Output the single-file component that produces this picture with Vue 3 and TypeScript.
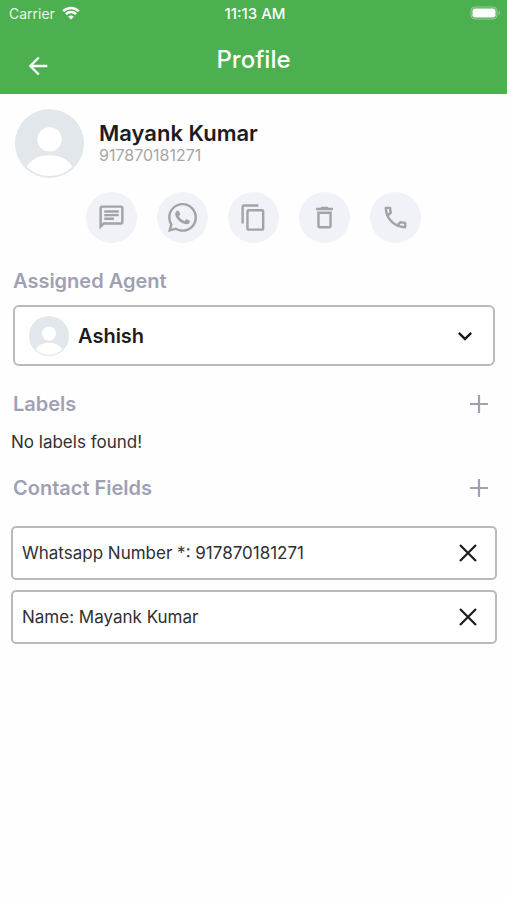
<script setup lang="ts">
import { ref } from 'vue'

interface Action {
  id: string
  label: string
  paths: string[]
  size: number
}

interface ContactField {
  label: string
  value: string
}

const contact = { name: 'Mayank Kumar', phone: '917870181271' }

const actions: Action[] = [
  {
    id: 'message',
    label: 'Send message',
    size: 29,
    paths: [
      'M4 4h16v12H5.17L4 17.17V4m0-2c-1.1 0-1.99.9-1.99 2L2 22l4-4h14c1.1 0 2-.9 2-2V4c0-1.1-.9-2-2-2H4zm2 10h8v2H6v-2zm0-3h12v2H6V9zm0-3h12v2H6V6z',
    ],
  },
  {
    id: 'whatsapp',
    label: 'Open WhatsApp',
    size: 35,
    paths: [
      'M19.05 4.91A9.82 9.82 0 0 0 12.04 2c-5.46 0-9.91 4.45-9.91 9.91 0 1.75.46 3.45 1.32 4.95L2.05 22l5.25-1.38c1.45.79 3.08 1.21 4.74 1.21 5.46 0 9.91-4.45 9.91-9.91 0-2.65-1.03-5.14-2.9-7.01zM12.04 20.15c-1.48 0-2.93-.4-4.2-1.15l-.3-.18-3.12.82.83-3.04-.2-.31a8.26 8.26 0 0 1-1.26-4.38c0-4.54 3.7-8.24 8.24-8.24 2.2 0 4.27.86 5.82 2.42a8.18 8.18 0 0 1 2.41 5.83c.02 4.54-3.68 8.23-8.22 8.23z',
      'M16.56 13.99c-.25-.12-1.47-.72-1.69-.81-.23-.08-.39-.12-.56.12-.17.25-.64.81-.78.97-.14.17-.29.19-.54.06-.25-.12-1.05-.39-1.99-1.23-.74-.66-1.23-1.47-1.38-1.72-.14-.25-.02-.38.11-.51.11-.11.25-.29.37-.43s.17-.25.25-.41c.08-.17.04-.31-.02-.43s-.56-1.34-.76-1.84c-.2-.48-.41-.42-.56-.43h-.48c-.17 0-.43.06-.66.31-.22.25-.86.85-.86 2.07s.89 2.4 1.01 2.56c.12.17 1.75 2.67 4.23 3.74.59.26 1.05.41 1.41.52.59.19 1.13.16 1.56.1.48-.07 1.47-.6 1.67-1.18.21-.58.21-1.07.14-1.18s-.22-.16-.47-.28z',
    ],
  },
  {
    id: 'copy',
    label: 'Copy contact',
    size: 29,
    paths: [
      'M16 1H4c-1.1 0-2 .9-2 2v14h2V3h12V1zm3 4H8c-1.1 0-2 .9-2 2v14c0 1.1.9 2 2 2h11c1.1 0 2-.9 2-2V7c0-1.1-.9-2-2-2zm0 16H8V7h11v14z',
    ],
  },
  {
    id: 'delete',
    label: 'Delete contact',
    size: 29,
    paths: [
      'M6 19c0 1.1.9 2 2 2h8c1.1 0 2-.9 2-2V7H6v12zM8 9h8v10H8V9zm7.5-5l-1-1h-5l-1 1H5v2h14V4z',
    ],
  },
  {
    id: 'call',
    label: 'Call contact',
    size: 29,
    paths: [
      'M6.54 5c.06.89.21 1.76.45 2.59l-1.2 1.2c-.41-1.2-.67-2.47-.76-3.79h1.51m9.86 12.02c.85.24 1.72.39 2.6.45v1.49c-1.32-.09-2.59-.35-3.8-.75l1.2-1.19M7.5 3H4c-.55 0-1 .45-1 1 0 9.39 7.61 17 17 17 .55 0 1-.45 1-1v-3.49c0-.55-.45-1-1-1-1.24 0-2.45-.2-3.57-.57-.1-.04-.21-.05-.31-.05-.26 0-.51.1-.71.29l-2.2 2.2c-2.83-1.45-5.15-3.76-6.59-6.59l2.2-2.2c.28-.28.36-.67.25-1.02C8.7 6.45 8.5 5.25 8.5 4c0-.55-.45-1-1-1z',
    ],
  },
]

const agents: string[] = ['Ashish']
const selectedAgent = ref<string>('Ashish')

const labels = ref<string[]>([])
const fields = ref<ContactField[]>([
  { label: 'Whatsapp Number *', value: '917870181271' },
  { label: 'Name', value: 'Mayank Kumar' },
])

function removeField(index: number): void {
  fields.value.splice(index, 1)
}
</script>

<template>
  <div class="screen">
    <header class="top">
      <div class="status">
        <div class="carrier">
          <span>Carrier</span>
          <svg class="wifi" viewBox="0 0 18 14" aria-hidden="true">
            <path d="M1.2 5.2a11.2 11.2 0 0 1 15.6 0" />
            <path d="M3.9 8.1a7.3 7.3 0 0 1 10.2 0" />
            <path class="wifi-dot" d="M9 13.6 6.2 10.8a4 4 0 0 1 5.6 0z" />
          </svg>
        </div>
        <span class="time">11:13 AM</span>
        <svg class="battery" viewBox="0 0 31 14" aria-hidden="true">
          <rect class="battery-case" x="1" y="1" width="26" height="12" rx="4" />
          <rect class="battery-fill" x="2.5" y="2.5" width="23" height="9" rx="2.2" />
          <path class="battery-tip" d="M28.6 4.8c1.8.6 1.8 3.8 0 4.4z" />
        </svg>
      </div>
      <div class="bar">
        <button class="back" type="button" aria-label="Back">
          <svg viewBox="0 0 24 24" aria-hidden="true">
            <path d="M20 11H7.83l5.59-5.59L12 4l-8 8 8 8 1.41-1.41L7.83 13H20v-2z" />
          </svg>
        </button>
        <h1>Profile</h1>
      </div>
    </header>

    <main>
      <section class="person">
        <svg class="avatar" viewBox="0 0 68 68" aria-hidden="true">
          <circle class="avatar-bg" cx="34" cy="34" r="34" />
          <circle class="avatar-fg" cx="34" cy="30" r="12" />
          <path class="avatar-fg" d="M11.5 57C16 49 24 45.5 34 45.5S52 49 56.5 57A32.5 32.5 0 0 1 11.5 57z" />
        </svg>
        <div class="who">
          <h2>{{ contact.name }}</h2>
          <p>{{ contact.phone }}</p>
        </div>
      </section>

      <nav class="actions" aria-label="Contact actions">
        <button v-for="a in actions" :key="a.id" type="button" :aria-label="a.label">
          <svg viewBox="0 0 24 24" :width="a.size" :height="a.size" aria-hidden="true">
            <path v-for="(d, i) in a.paths" :key="i" :d="d" />
          </svg>
        </button>
      </nav>

      <section class="block">
        <label class="heading agent-heading" for="agent">Assigned Agent</label>
        <div class="agent">
          <svg class="avatar small" viewBox="0 0 68 68" aria-hidden="true">
            <circle class="avatar-bg" cx="34" cy="34" r="34" />
            <circle class="avatar-fg" cx="34" cy="30" r="12" />
            <path class="avatar-fg" d="M11.5 57C16 49 24 45.5 34 45.5S52 49 56.5 57A32.5 32.5 0 0 1 11.5 57z" />
          </svg>
          <select id="agent" v-model="selectedAgent">
            <option v-for="name in agents" :key="name" :value="name">{{ name }}</option>
          </select>
          <svg class="chevron" viewBox="0 0 24 24" aria-hidden="true">
            <path d="M7.41 8.59 12 13.17l4.59-4.58L18 10l-6 6-6-6 1.41-1.41z" />
          </svg>
        </div>
      </section>

      <section class="block">
        <div class="heading-row">
          <h3 class="heading">Labels</h3>
          <button class="add" type="button" aria-label="Add label">
            <svg viewBox="0 0 20 20" aria-hidden="true"><path d="M10 1v18M1 10h18" /></svg>
          </button>
        </div>
      </section>
      <p v-if="labels.length === 0" class="empty">No labels found!</p>

      <section class="block">
        <div class="heading-row">
          <h3 class="heading">Contact Fields</h3>
          <button class="add" type="button" aria-label="Add contact field">
            <svg viewBox="0 0 20 20" aria-hidden="true"><path d="M10 1v18M1 10h18" /></svg>
          </button>
        </div>
      </section>
      <ul class="fields">
        <li v-for="(f, i) in fields" :key="f.label">
          <span>{{ f.label }}: {{ f.value }}</span>
          <button type="button" :aria-label="'Remove ' + f.label" @click="removeField(i)">
            <svg viewBox="0 0 18 18" aria-hidden="true"><path d="M1 1l16 16M17 1L1 17" /></svg>
          </button>
        </li>
      </ul>
    </main>
  </div>
</template>

<style>
body {
  background: #fefefe;
}
</style>

<style scoped>
.screen {
  font-family: Inter, "Liberation Sans", sans-serif;
  color: #1c1c1e;
}

h1,
h2,
h3,
p,
ul {
  margin: 0;
  padding: 0;
}

button {
  display: flex;
  align-items: center;
  justify-content: center;
  padding: 0;
  border: 0;
  background: none;
  cursor: pointer;
}

.top {
  background: #4caf50;
  color: #fff;
}

.status {
  display: grid;
  grid-template-columns: 1fr auto 1fr;
  align-items: center;
  height: 26px;
  padding: 0 6px 0 9px;
  font-size: 14px;
}

.carrier {
  display: flex;
  align-items: center;
  gap: 7px;
  color: #e9f6ea;
}

.wifi {
  width: 18px;
  height: 14px;
  fill: none;
  stroke: #fff;
  stroke-width: 2.4;
}

.wifi .wifi-dot {
  fill: #fff;
  stroke: none;
}

.time {
  font-size: 15px;
  font-weight: 500;
}

.battery {
  justify-self: end;
  width: 31px;
  height: 14px;
}

.battery-case {
  fill: none;
  stroke: #93ce96;
  stroke-width: 1;
}

.battery-fill {
  fill: #fff;
}

.battery-tip {
  fill: #93ce96;
}

.bar {
  display: grid;
  grid-template-columns: 1fr auto 1fr;
  align-items: start;
  height: 68px;
  padding: 0 24px;
}

.back {
  width: 28px;
  height: 28px;
  margin-top: 26px;
}

.back svg {
  width: 28px;
  height: 28px;
  fill: #fff;
}

h1 {
  margin-top: 18px;
  font-size: 24px;
  line-height: 32px;
  font-weight: 500;
}

.person {
  display: flex;
  align-items: center;
  gap: 15px;
  padding: 15px 15px 0;
}

.avatar {
  flex: none;
  width: 69px;
  height: 69px;
}

.avatar.small {
  width: 40px;
  height: 40px;
}

.avatar-bg {
  fill: #e1e7ea;
}

.avatar-fg {
  fill: #fff;
}

h2 {
  font-size: 22px;
  line-height: 24px;
  font-weight: 600;
}

.who {
  padding-bottom: 2px;
}

.who p {
  color: #a6a6a6;
  font-size: 16px;
  line-height: 20px;
}

.actions {
  display: flex;
  justify-content: center;
  gap: 20px;
  padding: 14px 0 24px;
}

.actions button {
  width: 51px;
  height: 51px;
  border-radius: 50%;
  background: #f1f2f8;
}

.actions svg {
  fill: #a3a3a5;
}

.block {
  padding: 0 12px 0 13px;
}

.heading {
  display: block;
  color: #9fa1b3;
  font-size: 20px;
  line-height: 28px;
  font-weight: 600;
}

.agent-heading {
  margin-bottom: 10px;
}

.agent {
  display: grid;
  grid-template-columns: 54px 1fr 42px;
  align-items: center;
  height: 61px;
  box-sizing: border-box;
  margin-bottom: 24px;
  border: 2px solid #bababa;
  border-radius: 6px;
  background: #fff;
}

.agent .avatar,
.agent .chevron {
  grid-row: 1;
  z-index: 1;
  pointer-events: none;
}

.agent .avatar {
  grid-column: 1;
  justify-self: end;
}

.agent .chevron {
  grid-column: 3;
  width: 28px;
  height: 28px;
  fill: #1c1c1e;
}

.agent select {
  grid-row: 1;
  grid-column: 1 / -1;
  height: 100%;
  width: 100%;
  padding: 0 46px 0 63px;
  border: 0;
  border-radius: 4px;
  appearance: none;
  background: transparent;
  color: #1c1c1e;
  font: 600 20px Inter, "Liberation Sans", sans-serif;
}

.heading-row {
  display: flex;
  align-items: center;
  justify-content: space-between;
}

.add {
  width: 32px;
  height: 28px;
}

.add svg {
  width: 20px;
  height: 20px;
  stroke: #9fa1b3;
  stroke-width: 2.2;
}

.empty {
  padding: 12px 11px 20px;
  color: #303032;
  font-size: 17px;
  line-height: 24px;
}

.fields {
  display: flex;
  flex-direction: column;
  gap: 10px;
  padding: 24px 10px 24px 11px;
  list-style: none;
}

.fields li {
  display: flex;
  align-items: center;
  justify-content: space-between;
  height: 54px;
  box-sizing: border-box;
  padding: 0 11px 0 9px;
  border: 2px solid #bababa;
  border-radius: 5px;
  background: #fff;
  color: #303032;
  font-size: 17px;
}

.fields button {
  width: 32px;
  height: 32px;
}

.fields button svg {
  width: 18px;
  height: 18px;
  stroke: #1c1c1e;
  stroke-width: 2.2;
}
</style>
